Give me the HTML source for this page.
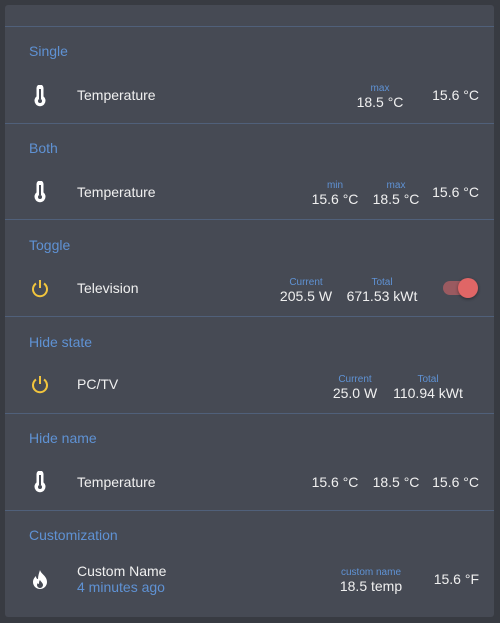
<!DOCTYPE html><html><head><style>
body{margin:0;width:500px;height:623px;background:#383b42;font-family:"Liberation Sans",sans-serif;position:relative;overflow:hidden}
.card{position:absolute;left:5px;top:5px;width:489px;height:612px;background:#464a54;border-radius:3px}
.hr{position:absolute;left:5px;width:489px;height:1px;background:#50607a}
.t{position:absolute;left:29px;color:#5f92d4;font-size:14px}
.n{position:absolute;left:77px;color:#f0f0f0;font-size:14px}
.c{position:absolute;text-align:center;width:100px;margin-left:-50px}
.l{color:#5f92d4;font-size:10px;line-height:11px}
.v{color:#f0f0f0;font-size:14px;line-height:16px}
.r{position:absolute;right:21px;color:#f0f0f0;font-size:14px}
svg{position:absolute}
</style></head><body>
<div class="card"></div>
<div class="hr" style="top:26px"></div>
<div class="hr" style="top:123px"></div>
<div class="hr" style="top:219px"></div>
<div class="hr" style="top:316px"></div>
<div class="hr" style="top:413px"></div>
<div class="hr" style="top:510px"></div>

<div class="t" style="top:43px">Single</div>
<svg style="left:32px;top:85px" width="16" height="22" viewBox="0 0 16 22"><path d="M4.5 3a3.5 3.5 0 0 1 7 0v8.5a5.5 5.5 0 1 1-7 0z" fill="#fff"/><circle cx="8" cy="16" r="2" fill="#464a54"/><rect x="7" y="4" width="2" height="10" fill="#464a54"/></svg>
<div class="n" style="top:87px">Temperature</div>
<div class="c" style="left:380px;top:83px"><div class="l">max</div><div class="v">18.5 °C</div></div>
<div class="r" style="top:87px">15.6 °C</div>

<div class="t" style="top:140px">Both</div>
<svg style="left:32px;top:181px" width="16" height="22" viewBox="0 0 16 22"><path d="M4.5 3a3.5 3.5 0 0 1 7 0v8.5a5.5 5.5 0 1 1-7 0z" fill="#fff"/><circle cx="8" cy="16" r="2" fill="#464a54"/><rect x="7" y="4" width="2" height="10" fill="#464a54"/></svg>
<div class="n" style="top:184px">Temperature</div>
<div class="c" style="left:335px;top:180px"><div class="l">min</div><div class="v">15.6 °C</div></div>
<div class="c" style="left:396px;top:180px"><div class="l">max</div><div class="v">18.5 °C</div></div>
<div class="r" style="top:184px">15.6 °C</div>

<div class="t" style="top:237px">Toggle</div>
<svg style="left:30px;top:278px" width="20" height="20" viewBox="0 0 20 20"><path d="M6 5.5a7 7 0 1 0 8 0" fill="none" stroke="#f2c53d" stroke-width="2"/><path d="M10 2v8" stroke="#f2c53d" stroke-width="2"/></svg>
<div class="n" style="top:280px">Television</div>
<div class="c" style="left:306px;top:277px"><div class="l">Current</div><div class="v">205.5 W</div></div>
<div class="c" style="left:382px;top:277px"><div class="l">Total</div><div class="v">671.53 kWt</div></div>
<div style="position:absolute;left:443px;top:281px;width:34px;height:14px;border-radius:7px;background:#9a5a60"></div>
<div style="position:absolute;left:458px;top:278px;width:20px;height:20px;border-radius:50%;background:#e06666;box-shadow:0 1px 3px rgba(0,0,0,.4)"></div>

<div class="t" style="top:334px">Hide state</div>
<svg style="left:30px;top:374px" width="20" height="20" viewBox="0 0 20 20"><path d="M6 5.5a7 7 0 1 0 8 0" fill="none" stroke="#f2c53d" stroke-width="2"/><path d="M10 2v8" stroke="#f2c53d" stroke-width="2"/></svg>
<div class="n" style="top:376px">PC/TV</div>
<div class="c" style="left:355px;top:374px"><div class="l">Current</div><div class="v">25.0 W</div></div>
<div class="c" style="left:428px;top:374px"><div class="l">Total</div><div class="v">110.94 kWt</div></div>

<div class="t" style="top:430px">Hide name</div>
<svg style="left:32px;top:471px" width="16" height="22" viewBox="0 0 16 22"><path d="M4.5 3a3.5 3.5 0 0 1 7 0v8.5a5.5 5.5 0 1 1-7 0z" fill="#fff"/><circle cx="8" cy="16" r="2" fill="#464a54"/><rect x="7" y="4" width="2" height="10" fill="#464a54"/></svg>
<div class="n" style="top:474px">Temperature</div>
<div class="c" style="left:335px;top:474px"><div class="v">15.6 °C</div></div>
<div class="c" style="left:396px;top:474px"><div class="v">18.5 °C</div></div>
<div class="r" style="top:474px">15.6 °C</div>

<div class="t" style="top:527px">Customization</div>
<svg style="left:32px;top:569px" width="16" height="20" viewBox="0 0 16 20"><path d="M8 1c1 4 7 6 7 12a7 7 0 0 1-14 0c0-3 2-5 3-6 0 2 1 3 2 3C6 7 7 4 8 1z" fill="#fff"/><path d="M8 11c1 2 3 3 3 5a3 3 0 0 1-6 0c0-1 1-2 1-2 0 1 1 1 1 1 0-1 0-3 1-4z" fill="#464a54"/></svg>
<div class="n" style="top:563px">Custom Name</div>
<div class="n" style="top:579px;color:#5f92d4">4 minutes ago</div>
<div class="c" style="left:371px;top:567px"><div class="l">custom name</div><div class="v">18.5 temp</div></div>
<div class="r" style="top:571px">15.6 °F</div>
</body></html>
